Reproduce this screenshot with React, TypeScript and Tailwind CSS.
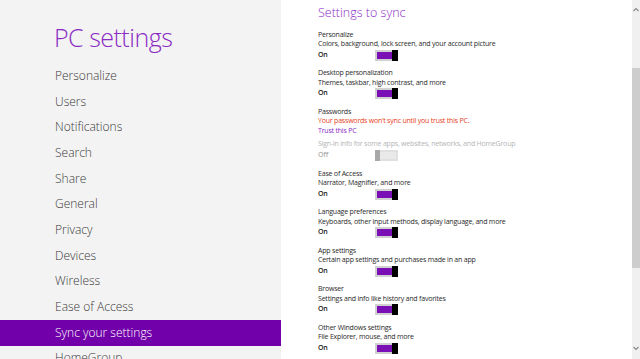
import React from "react";

const nav = [
  "Personalize",
  "Users",
  "Notifications",
  "Search",
  "Share",
  "General",
  "Privacy",
  "Devices",
  "Wireless",
  "Ease of Access",
  "Sync your settings",
  "HomeGroup",
];

function Toggle({ on }: { on: boolean }) {
  if (on) {
    return (
      <div className="flex h-[11px] w-[23px] border-[2px] border-[#d0d0d0] bg-[#d0d0d0]">
        <div className="flex-1 bg-[#7a0fb5]" />
        <div className="w-[6px] -my-[2px] -mr-[2px] bg-black" />
      </div>
    );
  }
  return (
    <div className="flex h-[11px] w-[23px] border-[2px] border-[#e0e0e0] bg-[#e9e9e9]">
      <div className="w-[5px] -my-[2px] -ml-[2px] bg-[#a8a8a8]" />
      <div className="flex-1" />
    </div>
  );
}

function ToggleRow({ on }: { on: boolean }) {
  return (
    <div className="flex h-[13px] items-center">
      <div
        className={
          "w-[57px] font-semibold " + (on ? "text-[#1a1a1a]" : "text-[#b0b0b0]")
        }
      >
        {on ? "On" : "Off"}
      </div>
      <Toggle on={on} />
    </div>
  );
}

function Group({
  title,
  desc,
  on = true,
}: {
  title: string;
  desc: string;
  on?: boolean;
}) {
  return (
    <div className="mb-[6.5px]">
      <div className="h-[9.5px] leading-[9.5px] text-[#2a2a2a]">{title}</div>
      <div className="h-[9.5px] leading-[9.5px] text-[#2a2a2a]">{desc}</div>
      <ToggleRow on={on} />
    </div>
  );
}

export default function App() {
  return (
    <div
      className="flex h-[359px] w-[640px] overflow-hidden bg-white"
      style={{ fontFamily: '"Open Sans", "Noto Sans", sans-serif' }}
    >
      <div className="w-[281px] shrink-0 bg-[#f3f3f3]">
        <div className="h-[63px] pl-[54px] pt-[21px] text-[25px] font-light leading-[32px] tracking-[-0.5px] text-[#8a2bc4]">
          PC settings
        </div>
        {nav.map((n) => (
          <div
            key={n}
            className={
              "flex h-[25.7px] items-center pl-[55px] text-[12px] font-light " +
              (n === "Sync your settings"
                ? "bg-[#7200aa] text-white"
                : "text-[#3a3a3a]")
            }
          >
            {n}
          </div>
        ))}
      </div>
      <div className="flex-1 pl-[37px] text-[7px] tracking-[-0.2px]">
        <div className="h-[29.5px] pt-[3px] text-[12.5px] font-light leading-[20px] tracking-normal text-[#8a2bc4]">
          Settings to sync
        </div>
        <Group
          title="Personalize"
          desc="Colors, background, lock screen, and your account picture"
        />
        <Group
          title="Desktop personalization"
          desc="Themes, taskbar, high contrast, and more"
        />
        <div className="mb-[7px]">
          <div className="h-[9.5px] leading-[9.5px] text-[#2a2a2a]">
            Passwords
          </div>
          <div className="h-[9.5px] leading-[9.5px] text-[#e8401c]">
            Your passwords won’t sync until you trust this PC.
          </div>
          <div className="h-[9.5px] leading-[9.5px] text-[#8a2bc4]">
            Trust this PC
          </div>
          <div className="mt-[4px] h-[9.5px] leading-[9.5px] text-[#b5b5b5]">
            Sign-in info for some apps, websites, networks, and HomeGroup
          </div>
          <ToggleRow on={false} />
        </div>
        <Group title="Ease of Access" desc="Narrator, Magnifier, and more" />
        <Group
          title="Language preferences"
          desc="Keyboards, other input methods, display language, and more"
        />
        <Group
          title="App settings"
          desc="Certain app settings and purchases made in an app"
        />
        <Group
          title="Browser"
          desc="Settings and info like history and favorites"
        />
        <Group
          title="Other Windows settings"
          desc="File Explorer, mouse, and more"
        />
      </div>
      <div className="flex w-[8px] shrink-0 flex-col bg-[#f0f0f0]">
        <div className="flex h-[68px] justify-center pt-[7px]">
          <svg width="6" height="5" viewBox="0 0 6 5">
            <path d="M0.5 4 L3 1.5 L5.5 4" fill="none" stroke="#8a8a8a" strokeWidth="1.2" />
          </svg>
        </div>
        <div className="h-[200px] bg-[#cdcdcd]" />
        <div className="flex flex-1 items-end justify-center pb-[8px]">
          <svg width="6" height="5" viewBox="0 0 6 5">
            <path d="M0.5 1 L3 3.5 L5.5 1" fill="none" stroke="#8a8a8a" strokeWidth="1.2" />
          </svg>
        </div>
      </div>
    </div>
  );
}
